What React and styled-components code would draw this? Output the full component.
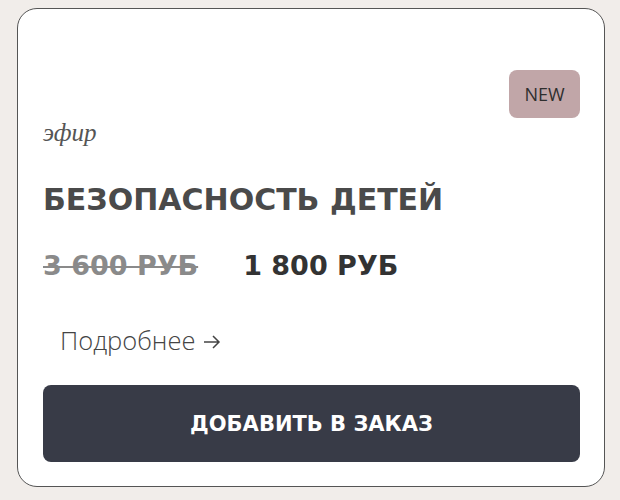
import React from 'react';
import styled, { createGlobalStyle } from 'styled-components';

const GlobalStyle = createGlobalStyle`
  body {
    margin: 0;
    background: #f1edea;
    font-family: 'DejaVu Sans', 'Liberation Sans', sans-serif;
  }
`;

const Page = styled.div`
  padding: 8px 15px 12px 17px;
`;

const Card = styled.div`
  box-sizing: border-box;
  width: 588px;
  height: 479px;
  background: #fff;
  border: 1.5px solid #555;
  border-radius: 20px;
  padding: 61px 24px 24px 25px;
  display: flex;
  flex-direction: column;
`;

const TopRow = styled.div`
  display: flex;
  justify-content: flex-end;
`;

const Badge = styled.span`
  display: flex;
  align-items: center;
  justify-content: center;
  width: 71px;
  height: 48px;
  border-radius: 8px;
  background: #c1a6a8;
  color: #2e2e2e;
  font-family: 'Open Sans', sans-serif;
  font-size: 18px;
`;

const Kind = styled.div`
  font-family: 'Liberation Serif', serif;
  font-style: italic;
  font-size: 25px;
  color: #555;
  line-height: 30px;
`;

const Title = styled.h2`
  margin: 34px 0 0;
  font-family: 'DejaVu Sans', sans-serif;
  font-weight: 700;
  font-size: 30px;
  color: #4a4a4a;
  line-height: 36px;
`;

const Prices = styled.div`
  margin-top: 32px;
  display: flex;
  gap: 45px;
  align-items: baseline;
`;

const Price = styled.span`
  font-family: 'DejaVu Sans', sans-serif;
  font-weight: 700;
  font-size: 27px;
  line-height: 32px;
  color: ${p => (p.$old ? '#8a8a8a' : '#333')};
  text-decoration: ${p => (p.$old ? 'line-through' : 'none')};
  text-decoration-thickness: 2px;
`;

const More = styled.a`
  margin: 42px 0 0 17px;
  display: flex;
  align-items: center;
  gap: 8px;
  font-family: 'Open Sans', sans-serif;
  font-weight: 300;
  font-size: 25.5px;
  line-height: 32px;
  color: #444;
  text-decoration: none;
`;

const Arrow = styled.svg`
  width: 18px;
  height: 16px;
  margin-top: 3px;
`;

const OrderButton = styled.button`
  margin-top: auto;
  height: 77px;
  width: 100%;
  border: none;
  border-radius: 8px;
  background: #383b47;
  color: #fff;
  font-family: 'DejaVu Sans', sans-serif;
  font-weight: 700;
  font-size: 21px;
`;

export default function App() {
  return (
    <>
      <GlobalStyle />
      <Page>
        <Card>
          <TopRow>
            <Badge>NEW</Badge>
          </TopRow>
          <Kind>эфир</Kind>
          <Title>БЕЗОПАСНОСТЬ ДЕТЕЙ</Title>
          <Prices>
            <Price $old>3 600 РУБ</Price>
            <Price>1 800 РУБ</Price>
          </Prices>
          <More href="#">
            Подробнее
            <Arrow viewBox="0 0 18 16" fill="none" stroke="#444" strokeWidth="1.5">
              <path d="M1 8h15M10 2l6 6-6 6" />
            </Arrow>
          </More>
          <OrderButton>ДОБАВИТЬ В ЗАКАЗ</OrderButton>
        </Card>
      </Page>
    </>
  );
}
